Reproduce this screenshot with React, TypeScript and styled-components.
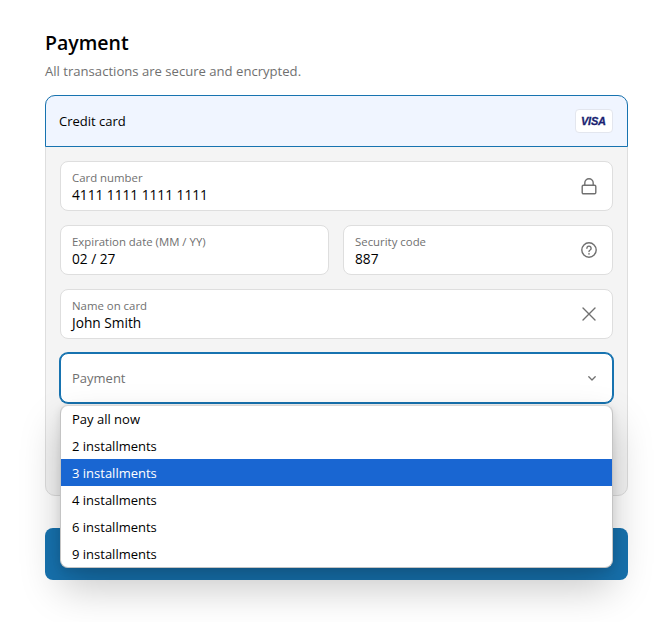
import React from 'react';
import styled, { createGlobalStyle } from 'styled-components';

const Global = createGlobalStyle`
  html, body { margin: 0; padding: 0; background: #fff; }
  body { font-family: "Open Sans", "Noto Sans", "Liberation Sans", sans-serif; }
`;

const Page = styled.div`
  box-sizing: border-box;
  width: 663px;
  height: 622px;
  overflow: hidden;
  padding: 29px 35px 0 45px;
`;

const Title = styled.h2`
  margin: 0;
  font-size: 19.5px;
  line-height: 27px;
  font-weight: 600;
  color: #000;
`;

const Subtitle = styled.p`
  margin: 5px 0 14px;
  font-size: 13.1px;
  line-height: 20px;
  color: #707070;
`;

const Card = styled.section`
  border: 1px solid #dedede;
  border-radius: 10px;
  background: #f4f4f4;
  box-sizing: border-box;
  height: 401px;
`;

const CardHeader = styled.div`
  display: flex;
  align-items: center;
  justify-content: space-between;
  box-sizing: border-box;
  height: 52px;
  margin: -1px -1px 0;
  padding: 0 14px 0 13px;
  border: 1px solid #1773b0;
  border-radius: 10px 10px 0 0;
  background: #f0f5ff;
  font-size: 13px;
  color: #000;
`;

const VisaBadge = styled.div`
  display: flex;
  align-items: center;
  justify-content: center;
  box-sizing: border-box;
  width: 38px;
  height: 24px;
  background: #fff;
  border: 1px solid #e3e6ee;
  border-radius: 4px;
`;

const CardBody = styled.div`
  position: relative;
  display: flex;
  flex-direction: column;
  gap: 14px;
  padding: 14px;
`;

const Row = styled.div`
  display: grid;
  grid-template-columns: 269px 1fr;
  gap: 14px;
`;

const Field = styled.div<{ $focused?: boolean }>`
  display: flex;
  align-items: center;
  justify-content: space-between;
  box-sizing: border-box;
  height: 50px;
  padding: 0 15px 0 11px;
  background: #fff;
  border: 1px solid ${(p) => (p.$focused ? '#1773b0' : '#dedede')};
  border-radius: 8px;
  box-shadow: ${(p) => (p.$focused ? '0 0 0 1px #1773b0' : 'none')};
`;

const FieldText = styled.div`
  display: flex;
  flex-direction: column;
  padding-top: 1px;
`;

const FieldLabel = styled.span`
  font-size: 11.4px;
  line-height: 15px;
  color: #707070;
`;

const FieldValue = styled.span`
  margin-top: 1px;
  font-size: 13.7px;
  line-height: 18px;
  color: #000;
`;

const Placeholder = styled.span`
  font-size: 13px;
  color: #707070;
`;

const Dropdown = styled.ul`
  position: absolute;
  top: 258px;
  left: 14px;
  right: 14px;
  z-index: 2;
  margin: 0;
  padding: 0;
  list-style: none;
  background: #fff;
  border: 1px solid #c4c4c4;
  border-top: 0;
  border-radius: 8px;
  overflow: hidden;
  box-shadow: inset 0 1px 0 #d8d8d8, 0 20px 40px rgba(0, 0, 0, 0.22), 0 2px 8px rgba(0, 0, 0, 0.1);
`;

const Option = styled.li<{ $active?: boolean }>`
  height: 27px;
  padding: 0 11px;
  font-size: 13px;
  line-height: 28px;
  color: ${(p) => (p.$active ? '#fff' : '#000')};
  background: ${(p) => (p.$active ? '#1966d2' : 'transparent')};
`;

const PayButton = styled.div`
  height: 52px;
  margin-top: 32px;
  border-radius: 8px;
  background: #1773b0;
`;

const iconProps = {
  fill: 'none',
  stroke: '#707070',
  strokeLinecap: 'round' as const,
  strokeLinejoin: 'round' as const,
};

const options = ['Pay all now', '2 installments', '3 installments', '4 installments', '6 installments', '9 installments'];

export default function App() {
  return (
    <Page>
      <Global />
      <Title>Payment</Title>
      <Subtitle>All transactions are secure and encrypted.</Subtitle>
      <Card>
        <CardHeader>
          Credit card
          <VisaBadge>
            <svg width="26" height="10" viewBox="0 0 26 10">
              <text x="0" y="9" fontFamily="Liberation Sans" fontSize="11" fontWeight="700" fontStyle="italic" fill="#1a1f71" stroke="#1a1f71" strokeWidth="0.3" textLength="25">VISA</text>
            </svg>
          </VisaBadge>
        </CardHeader>
        <CardBody>
          <Field>
            <FieldText>
              <FieldLabel>Card number</FieldLabel>
              <FieldValue>4111 1111 1111 1111</FieldValue>
            </FieldText>
            <svg width="16" height="17" viewBox="0 0 16 17" {...iconProps} strokeWidth="1.4">
              <rect x="1.2" y="7.2" width="13.6" height="8.6" rx="1.2" />
              <path d="M3.8 7V5a4.2 4.2 0 0 1 8.4 0v2" />
            </svg>
          </Field>
          <Row>
            <Field>
              <FieldText>
                <FieldLabel>Expiration date (MM / YY)</FieldLabel>
                <FieldValue>02 / 27</FieldValue>
              </FieldText>
            </Field>
            <Field>
              <FieldText>
                <FieldLabel>Security code</FieldLabel>
                <FieldValue>887</FieldValue>
              </FieldText>
              <svg width="16" height="16" viewBox="0 0 16 16" {...iconProps} strokeWidth="1.4">
                <circle cx="8" cy="8" r="7.2" />
                <path d="M5.9 6.2a2.1 2.1 0 1 1 3.2 1.8c-.7.4-1.1.8-1.1 1.6" />
                <path d="M8 11.9v.1" strokeWidth="1.6" />
              </svg>
            </Field>
          </Row>
          <Field>
            <FieldText>
              <FieldLabel>Name on card</FieldLabel>
              <FieldValue>John Smith</FieldValue>
            </FieldText>
            <svg width="16" height="16" viewBox="0 0 16 16" {...iconProps} strokeWidth="1.4">
              <path d="M2 2l12 12M14 2L2 14" />
            </svg>
          </Field>
          <Field $focused>
            <Placeholder>Payment</Placeholder>
            <svg width="8" height="5" viewBox="0 0 8 5" {...iconProps} strokeWidth="1.3" style={{ marginTop: 1, marginRight: 1 }}>
              <path d="M.8.8L4 4l3.2-3.2" />
            </svg>
          </Field>
          <Dropdown>
            {options.map((o) => (
              <Option key={o} $active={o === '3 installments'}>{o}</Option>
            ))}
          </Dropdown>
        </CardBody>
      </Card>
      <PayButton />
    </Page>
  );
}
